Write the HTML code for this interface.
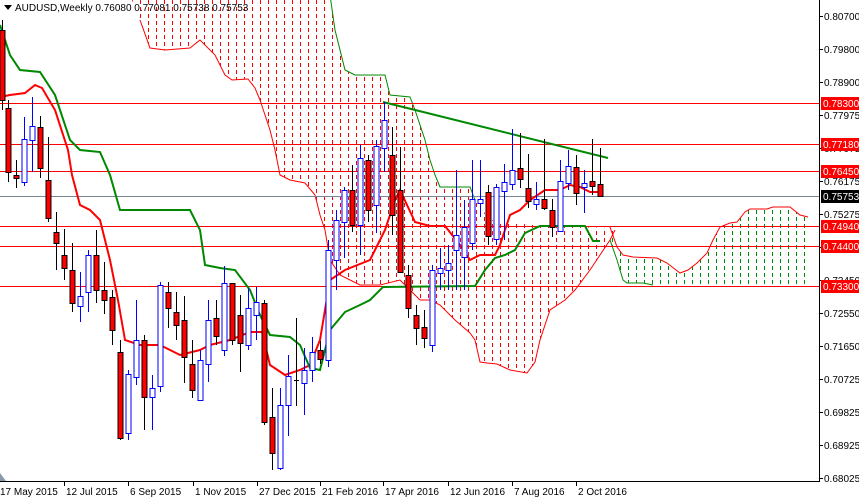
<!DOCTYPE html>
<html><head><meta charset="utf-8"><style>
html,body{margin:0;padding:0;background:#fff;}
svg{display:block;font-family:"Liberation Sans",sans-serif;}
</style></head><body>
<svg id="s" width="859" height="497" viewBox="0 0 859 497" xmlns="http://www.w3.org/2000/svg">
<defs>
<clipPath id="rc"><polygon id="rcp" points=""/></clipPath>
<clipPath id="gc"><polygon id="gcp" points=""/></clipPath>
<clipPath id="plot"><rect x="0" y="0" width="819" height="481"/></clipPath>
</defs>
<rect width="859" height="497" fill="#fff"/>
<g id="cloud" clip-path="url(#plot)"></g>
<g id="hl"></g>
<g id="lines" clip-path="url(#plot)"></g>
<g id="cd"></g>
<g id="ax"></g>
</svg>
<script>
var NS="http://www.w3.org/2000/svg";
function el(p,t,a,txt){var e=document.createElementNS(NS,t);for(var k in a)e.setAttribute(k,a[k]);if(txt)e.textContent=txt;document.getElementById(p).appendChild(e);return e;}
function pts(a){return a.map(function(p){return p.join(",")}).join(" ");}
var rTop=[[120,-5],[330,-5],[335,30],[345,70],[355,75],[385,75],[390,95],[410,97],[415,110],[425,140],[430,160],[435,175],[440,187],[470,187],[475,200],[490,220],[540,226],[610,228]];
var rBot=[[615,230],[610,240],[600,255],[590,270],[575,290],[565,300],[550,310],[540,340],[535,362],[527,373],[510,370],[497,364],[487,363],[480,362],[475,340],[470,333],[455,320],[440,305],[430,300],[420,300],[410,290],[400,280],[380,285],[360,285],[340,275],[330,260],[325,230],[320,215],[315,195],[305,183],[290,180],[280,175],[275,150],[270,130],[265,115],[260,100],[255,88],[248,79],[232,80],[225,75],[215,55],[200,40],[190,48],[165,50],[150,48],[140,20],[130,-5]];
document.getElementById("rcp").setAttribute("points",pts(rTop.concat(rBot)));
var gTop=[[610,227],[617,247],[623,255],[633,257],[657,258],[667,263],[680,273],[688,270],[697,263],[707,253],[713,240],[720,227],[730,223],[737,222],[745,212],[750,209],[767,209],[773,207],[790,207],[800,215],[808,217]];
var gBot=[[808,285],[653,285],[643,283],[627,283],[623,280],[617,260],[610,240]];
document.getElementById("gcp").setAttribute("points",pts(gTop.concat(gBot)));
var rg=el("cloud","g",{"clip-path":"url(#rc)"});
for(var x=132;x<616;x+=8){var l=document.createElementNS(NS,"line");l.setAttribute("x1",x+.5);l.setAttribute("x2",x+.5);l.setAttribute("y1",0);l.setAttribute("y2",480);l.setAttribute("stroke","#f00");l.setAttribute("stroke-dasharray","4,3");rg.appendChild(l);}
var gg=el("cloud","g",{"clip-path":"url(#gc)"});
for(var x=612;x<808;x+=8){var l=document.createElementNS(NS,"line");l.setAttribute("x1",x+.5);l.setAttribute("x2",x+.5);l.setAttribute("y1",0);l.setAttribute("y2",480);l.setAttribute("stroke","#080");l.setAttribute("stroke-dasharray","4,3");gg.appendChild(l);}
el("cloud","polyline",{points:pts(rBot.slice(0,-1)),fill:"none",stroke:"#f00","stroke-width":1});
el("cloud","polyline",{points:pts(rTop.slice(1,15)),fill:"none",stroke:"#080","stroke-width":1});
el("cloud","polyline",{points:pts(gTop),fill:"none",stroke:"#f00","stroke-width":1});
el("cloud","polyline",{points:pts(gBot.slice(1)),fill:"none",stroke:"#080","stroke-width":1});
el("hl","line",{x1:0,x2:819,y1:196.5,y2:196.5,stroke:"#778899","stroke-width":1});
[103,144,171,226,246,286].forEach(function(y){el("hl","line",{x1:0,x2:819,y1:y+.5,y2:y+.5,stroke:"#f00","stroke-width":1});});
var ten=[[0,97],[10,95],[25,93],[35,85],[42,88],[55,110],[68,150],[72,175],[80,205],[90,210],[100,220],[110,260],[118,300],[125,340],[140,345],[160,345],[180,355],[200,350],[210,345],[230,340],[250,332],[262,332],[270,365],[285,375],[300,370],[310,365],[320,340],[330,280],[345,270],[370,260],[385,230],[395,200],[400,190],[415,222],[430,226],[445,226],[460,245],[470,260],[480,255],[495,255],[500,245],[510,215],[520,210],[530,200],[545,190],[560,190],[570,185],[580,187],[590,192],[600,192]];
var kij=[[0,25],[10,55],[20,70],[40,72],[55,95],[70,140],[80,150],[100,152],[110,175],[120,210],[190,210],[200,230],[205,265],[220,268],[235,270],[250,290],[260,315],[270,335],[290,337],[300,345],[310,368],[320,370],[330,330],[345,312],[360,305],[370,300],[383,287],[475,286],[485,270],[495,258],[505,255],[515,250],[525,233],[540,226],[585,226],[593,241],[600,241]];
el("lines","polyline",{points:pts(ten),fill:"none",stroke:"#f00","stroke-width":2});
el("lines","polyline",{points:pts(kij),fill:"none",stroke:"#080","stroke-width":2});
el("lines","line",{x1:383,y1:102,x2:608,y2:158,stroke:"#080","stroke-width":2});
var C=[[2,30,100,20,110],[8,108,172,100,182],[16,175,178,160,188],[24,182,139,117,186],[32,140,126,97,172],[40,127,168,116,178],[48,180,218,137,222],[56,232,243,212,270],[64,255,268,229,280],[72,270,303,243,312],[80,306,296,272,322],[88,292,255,250,312],[96,255,290,230,303],[104,290,300,262,314],[112,297,330,290,345],[120,352,438,340,440],[128,433,374,370,440],[136,377,340,300,385],[144,340,397,335,430],[152,397,388,375,430],[160,386,285,282,392],[168,292,308,282,328],[176,312,325,292,340],[184,320,357,296,383],[192,364,390,340,398],[200,400,360,350,400],[208,364,320,300,382],[216,318,336,300,345],[224,350,283,266,356],[232,283,340,284,345],[240,315,343,295,372],[248,345,308,288,350],[256,315,302,287,340],[264,303,422,300,425],[272,417,453,388,470],[280,468,405,388,470],[288,405,376,355,436],[296,380,380,318,406],[304,383,370,348,415],[312,370,352,337,382],[320,350,359,341,364],[328,360,250,240,367],[336,260,220,210,290],[344,222,190,187,258],[352,190,225,165,232],[360,225,158,145,255],[368,160,210,155,222],[376,205,146,140,233],[384,148,120,102,172],[392,155,215,127,235],[400,190,272,147,273],[408,275,308,265,318],[416,315,328,305,345],[424,327,338,310,348],[432,345,270,265,352],[440,273,268,248,290],[448,270,263,245,290],[456,250,235,170,290],[464,257,227,200,290],[472,243,199,160,250],[480,203,199,160,217],[488,192,236,185,245],[496,239,187,184,245],[504,191,182,164,240],[512,184,170,129,190],[520,168,179,133,188],[528,188,201,154,208],[536,204,199,182,210],[544,199,208,139,210],[552,210,227,199,237],[560,231,181,160,232],[568,183,166,150,190],[576,167,193,155,205],[584,187,183,170,213],[592,181,186,139,195],[600,184,196,148,197]];
C.forEach(function(c){var x=c[0],o=c[1],cl=c[2],bull=cl<o,col=bull?"#00f":"#000";
el("cd","line",{x1:x+.5,x2:x+.5,y1:c[3],y2:c[4],stroke:col,"stroke-width":1});
var t=Math.min(o,cl),h=Math.max(Math.abs(o-cl),1);
if(o==cl){el("cd","line",{x1:x-2,x2:x+3,y1:o+.5,y2:o+.5,stroke:"#000"});return;}
el("cd","rect",{x:x-2,y:t+.5,width:5,height:h,fill:bull?"#fff":"#f00",stroke:col,"stroke-width":1});});
el("ax","line",{x1:819.5,x2:819.5,y1:0,y2:482,stroke:"#000"});
el("ax","line",{x1:0,x2:820,y1:481.5,y2:481.5,stroke:"#000"});
var pl=[["0.80700",16],["0.79800",49],["0.78900",82],["0.77975",115],["0.77075",148],["0.76175",181],["0.75275",214],["0.74375",247],["0.73450",280],["0.72550",313],["0.71650",346],["0.70725",379],["0.69825",412],["0.68925",445],["0.68025",478]];
pl.forEach(function(p){el("ax","line",{x1:819,x2:823,y1:p[1]+.5,y2:p[1]+.5,stroke:"#000"});el("ax","text",{x:824,y:p[1]+4,"font-size":10,fill:"#000"},p[0]);});
[["0.78300",103,"#f00"],["0.77180",144,"#f00"],["0.76450",171,"#f00"],["0.75753",196,"#000"],["0.74940",226,"#f00"],["0.74400",246,"#f00"],["0.73300",286,"#f00"]].forEach(function(p){el("ax","rect",{x:821,y:p[1]-6,width:38,height:13,fill:p[2]});el("ax","text",{x:823,y:p[1]+4,"font-size":10,fill:"#fff"},p[0]);});
var dl=[[0,"17 May 2015"],[64,"12 Jul 2015"],[128,"6 Sep 2015"],[193,"1 Nov 2015"],[257,"27 Dec 2015"],[320,"21 Feb 2016"],[383,"17 Apr 2016"],[448,"12 Jun 2016"],[512,"7 Aug 2016"],[576,"2 Oct 2016"]];
dl.forEach(function(d){if(d[0]>0)el("ax","line",{x1:d[0]+.5,x2:d[0]+.5,y1:481,y2:486,stroke:"#000"});el("ax","text",{x:d[0]+(d[0]>0?2:0),y:495,"font-size":10,fill:"#000"},d[1]);});
el("ax","polygon",{points:"0,473 0,481 6,481",fill:"#8899aa"});
el("ax","polygon",{points:"4,5 12,5 8,10",fill:"#000"});
el("ax","text",{x:15,y:11,"font-size":10,fill:"#000"},"AUDUSD,Weekly  0.76080 0.77081 0.75738 0.75753");
</script>
</body></html>
